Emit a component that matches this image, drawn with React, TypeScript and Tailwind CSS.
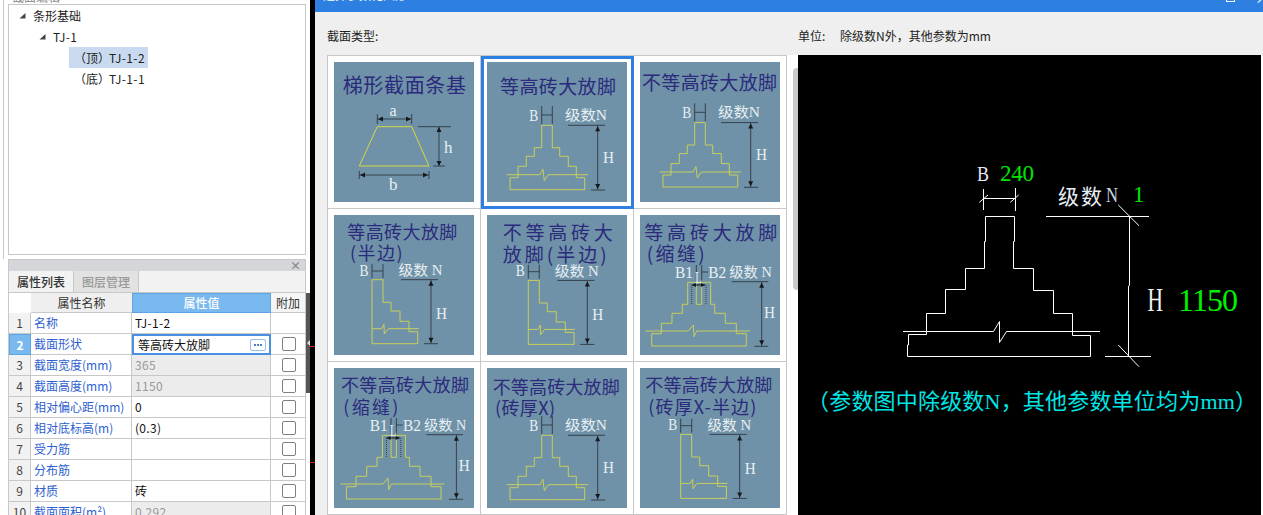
const serif = "font-['Liberation_Serif','Noto_Sans_CJK_SC',serif]";

const LINE = '#c9cf5a';
const DARK = '#36424c';
const PALE = '#e8eff3';
const NAVY = '#2b2a7c';

type TitleLine = { t: string; x: number; y: number; w: number; s?: number };

const Title = ({ lines }: { lines: TitleLine[] }) => (
    <>
        {lines.map((l) => (
            <text key={l.t} x={l.x} y={l.y} textLength={l.w} fontSize={l.s ?? 19} fill={NAVY}>
                {l.t}
            </text>
        ))}
    </>
);

const Label = ({ x, y, w, size = 16, children }: { x: number; y: number; w?: number; size?: number; children: string }) => (
    <text x={x} y={y} textLength={w} lengthAdjust="spacingAndGlyphs" fontSize={size} fill={PALE} className={serif}>
        {children}
    </text>
);

// H dimension with level line and arrows
const HeightDim = ({ x, top, bottom, x1, x2, tx1 }: { x: number; top: number; bottom: number; x1: number; x2: number; tx1: number }) => (
    <>
        <line x1={x1} x2={x2} y1={top} y2={top} stroke={DARK} />
        <line x1={x} x2={x} y1={top} y2={bottom} stroke={DARK} />
        <line x1={tx1} x2={x2} y1={bottom} y2={bottom} stroke={DARK} />
        <polygon points={`${x},${top + 1} ${x - 2.5},${top + 6} ${x + 2.5},${top + 6}`} fill="#16181c" />
        <polygon points={`${x},${bottom - 1} ${x - 2.5},${bottom - 6} ${x + 2.5},${bottom - 6}`} fill="#16181c" />
    </>
);

const WidthTick = ({ x1, x2, top, bottom }: { x1: number; x2: number; top: number; bottom: number }) => (
    <>
        <line x1={x1} x2={x1} y1={top} y2={bottom} stroke={DARK} />
        <line x1={x2} x2={x2} y1={top} y2={bottom} stroke={DARK} />
        <line x1={x1} x2={x2} y1={(top + bottom) / 2} y2={(top + bottom) / 2} stroke={DARK} />
    </>
);

const Trapezoid = () => (
    <>
        <polygon points="43.3,64.7 77.7,64.7 95,104 25.3,104" fill="none" stroke="#d6d844" />
        <WidthTick x1={43.3} x2={77.7} top={52} bottom={62} />
        <polygon points="44,57 49,54.5 49,59.5" fill="#16181c" />
        <polygon points="77,57 72,54.5 72,59.5" fill="#16181c" />
        <Label x={55.5} y={54}>a</Label>
        <line x1={84} x2={117} y1={64.7} y2={64.7} stroke={DARK} />
        <line x1={105} x2={105} y1={65} y2={104} stroke={DARK} />
        <line x1={99} x2={111} y1={104} y2={104} stroke={DARK} />
        <polygon points="105,65 102.5,70 107.5,70" fill="#16181c" />
        <polygon points="105,104 102.5,99 107.5,99" fill="#16181c" />
        <Label x={110} y={91} size={17}>h</Label>
        <WidthTick x1={25.3} x2={95} top={109} bottom={117} />
        <polygon points="26,113 31,110.5 31,115.5" fill="#16181c" />
        <polygon points="94,113 89,110.5 89,115.5" fill="#16181c" />
        <Label x={55} y={128} size={17}>b</Label>
    </>
);

const FullFooting = ({ dy = 0 }: { dy?: number }) => (
    <g transform={`translate(0 ${dy})`}>
        <polygon
            points="54.7,63.3 54.7,85.7 47.3,85.7 47.3,94.3 39.3,94.3 39.3,104.3 31,104.3 31,115.7 23,115.7 23,127.7 97.7,127.7 97.7,115.7 89.3,115.7 89.3,104.3 81.3,104.3 81.3,94.3 72.7,94.3 72.7,85.7 65.3,85.7 65.3,63.3"
            fill="none"
            stroke={LINE}
        />
        <polyline points="19.7,112.7 53,112.7 56,107.3 57.3,118.7 61.3,112.7 101.3,112.7" fill="none" stroke={LINE} />
        <WidthTick x1={54.7} x2={65.3} top={44} bottom={62} />
        <Label x={42.3} y={59} w={9}>B</Label>
        <Label x={78} y={58} w={42} size={14}>级数N</Label>
        <HeightDim x={110.7} top={63.3} bottom={128} x1={81} x2={118} tx1={104} />
        <Label x={116} y={100.7} w={11}>H</Label>
    </g>
);

const HalfFooting = ({ dx = 0, dy = 0 }: { dx?: number; dy?: number }) => (
    <g transform={`translate(${dx} ${dy})`}>
        <polygon
            points="38,64.7 38,128.7 83.7,128.7 83.7,116.7 75,116.7 75,106.3 66,106.3 66,96 57,96 57,87.3 49,87.3 49,64.7"
            fill="none"
            stroke={LINE}
        />
        <polyline points="38,113.7 47.7,113.7 50,109.3 50.3,119 54.3,113.7 84.7,113.7" fill="none" stroke={LINE} />
        <WidthTick x1={38} x2={49} top={49} bottom={63} />
        <Label x={25.5} y={60.5} w={9}>B</Label>
        <Label x={64.5} y={60} w={44} size={14}>级数 N</Label>
        <HeightDim x={97} top={64.7} bottom={128.7} x1={67} x2={104} tx1={90} />
        <Label x={102} y={104} w={11}>H</Label>
    </g>
);

const SlitFooting = ({ dx = 0 }: { dx?: number }) => (
    <g transform={`translate(${dx} 0)`}>
        <polygon
            points="47.7,67.3 47.7,89.3 42.3,89.3 42.3,98.3 32,98.3 32,108.3 21.3,108.3 21.3,118.7 11.7,118.7 11.7,131 106.3,131 106.3,118.7 96.3,118.7 96.3,108.3 85.3,108.3 85.3,98.3 74.7,98.3 74.7,89.3 70.7,89.3 70.7,67.3"
            fill="none"
            stroke={LINE}
        />
        <polyline points="56.3,67.3 56.3,89.3 61.7,89.3 61.7,67.3" fill="none" stroke={LINE} />
        <line x1={51.7} x2={51.7} y1={70} y2={90} stroke={DARK} strokeDasharray="1 1" />
        <line x1={66} x2={66} y1={70} y2={90} stroke={DARK} strokeDasharray="1 1" />
        <polyline points="5.7,116 48.3,116 53.3,110 54,121.7 56.7,116 109.7,116" fill="none" stroke={LINE} />
        <line x1={56.3} x2={56.3} y1={50} y2={67} stroke={DARK} />
        <line x1={61.7} x2={61.7} y1={50} y2={67} stroke={DARK} />
        <line x1={61.7} x2={68} y1={57} y2={57} stroke={DARK} />
        <Label x={35} y={62.7} w={18}>B1</Label>
        <Label x={68.3} y={62.7} w={18}>B2</Label>
        <Label x={89.3} y={61.7} w={42.4} size={14}>级数 N</Label>
        <Label x={55} y={68} w={7}>L</Label>
        <line x1={52} x2={65} y1={70} y2={70} stroke="#16181c" />
        <polygon points="52,70 56,68 56,72" fill="#16181c" />
        <polygon points="65,70 61,68 61,72" fill="#16181c" />
        <HeightDim x={121.7} top={66.7} bottom={131.3} x1={91.7} x2={128.3} tx1={114.3} />
        <Label x={124} y={103} w={11}>H</Label>
    </g>
);

const THUMBS = [
    { lines: [{ t: '梯形截面条基', x: 8.7, y: 31, w: 123.3, s: 20 }], art: <Trapezoid /> },
    { lines: [{ t: '等高砖大放脚', x: 13, y: 32, w: 116 }], art: <FullFooting /> },
    { lines: [{ t: '不等高砖大放脚', x: 2, y: 28, w: 135 }], art: <FullFooting dy={-2.7} /> },
    {
        lines: [
            { t: '等高砖大放脚', x: 13.3, y: 24, w: 110, s: 18 },
            { t: '(半边)', x: 16, y: 45, w: 52.7, s: 18 },
        ],
        art: <HalfFooting />,
    },
    {
        lines: [
            { t: '不等高砖大', x: 15.7, y: 25, w: 110 },
            { t: '放脚(半边)', x: 15.7, y: 47, w: 104 },
        ],
        art: <HalfFooting dx={3.3} dy={0.7} />,
    },
    {
        lines: [
            { t: '等高砖大放脚', x: 4.3, y: 25, w: 133 },
            { t: '(缩缝)', x: 6.7, y: 46, w: 58 },
        ],
        art: <SlitFooting />,
    },
    {
        lines: [
            { t: '不等高砖大放脚', x: 7, y: 24, w: 128, s: 18 },
            { t: '(缩缝)', x: 9.3, y: 46, w: 55, s: 18 },
        ],
        art: <SlitFooting dx={0.7} />,
    },
    {
        lines: [
            { t: '不等高砖大放脚', x: 5.7, y: 25.5, w: 127, s: 18 },
            { t: '(砖厚X)', x: 8, y: 47, w: 60, s: 18 },
        ],
        art: <FullFooting dy={4} />,
    },
    {
        lines: [
            { t: '不等高砖大放脚', x: 5.3, y: 24, w: 127, s: 18 },
            { t: '(砖厚X-半边)', x: 8.3, y: 46, w: 108, s: 18 },
        ],
        art: <HalfFooting dx={2.7} dy={1.7} />,
    },
];

const TreeArrow = () => (
    <svg width="7" height="6" viewBox="0 0 7 6" className="shrink-0">
        <polygon points="6.5,0 6.5,5.5 0.5,5.5" fill="#444" />
    </svg>
);

const ROWS = [
    { n: '1', name: '名称', value: 'TJ-1-2', box: false },
    { n: '2', name: '截面形状', value: '等高砖大放脚', box: true, active: true },
    { n: '3', name: '截面宽度(mm)', value: '365', box: true, muted: true },
    { n: '4', name: '截面高度(mm)', value: '1150', box: true, muted: true },
    { n: '5', name: '相对偏心距(mm)', value: '0', box: true },
    { n: '6', name: '相对底标高(m)', value: '(0.3)', box: true },
    { n: '7', name: '受力筋', value: '', box: true },
    { n: '8', name: '分布筋', value: '', box: true },
    { n: '9', name: '材质', value: '砖', box: true },
    { n: '10', name: '截面面积(m²)', value: '0.292', box: true, muted: true },
];

const TreePanel = () => (
    <div className="h-[259px] shrink-0 ml-[3px] border-l border-[#c8c8c8] pl-[4px]">
        <div className="h-1 overflow-hidden pl-1 text-xs leading-[12px] text-[#888]">
            <div className="-mt-[9px]">截面编辑</div>
        </div>
        <div className="h-[251px] w-[298px] border border-[#c8c8c8] text-xs leading-[21px] text-[#222]">
            <div className="flex h-[21px] items-center gap-[7px] pl-[10px]">
                <TreeArrow />
                <span>条形基础</span>
            </div>
            <div className="flex h-[21px] items-center gap-[7px] pl-[30px]">
                <TreeArrow />
                <span className="tracking-[0.4px]">TJ-1</span>
            </div>
            <div className="ml-[60px] flex h-[21px] w-[79px] bg-[#c9daf0] pl-[5px]">
                <span className="w-[35px] shrink-0">{'\uFF08顶\uFF09'}</span>
                <span className="tracking-[0.4px]">TJ-1-2</span>
            </div>
            <div className="ml-[60px] flex h-[21px] w-[79px] pl-[5px]">
                <span className="w-[35px] shrink-0">{'\uFF08底\uFF09'}</span>
                <span className="tracking-[0.4px]">TJ-1-1</span>
            </div>
        </div>
    </div>
);

const PropertyPanel = () => (
    <div className="flex min-h-0 flex-1">
        <div className="ml-[8px] w-[298px] shrink-0 border-x border-t border-[#c8c8c8]">
            <div className="flex h-[11px] items-center justify-end bg-[#d5d6da] pr-[4px] text-[11px] font-bold leading-none text-[#888]">×</div>
            <div className="flex h-[22px] border-b border-[#c8c8c8] bg-[#f2f2f2] text-xs leading-[22px]">
                <div className="w-[65px] border-r border-[#c8c8c8] text-center font-medium text-[#333]">属性列表</div>
                <div className="w-[65px] border-r border-[#c8c8c8] bg-[#e2e2e2] text-center font-medium text-[#999]">图层管理</div>
            </div>
            <div className="grid grid-cols-[22px_101px_139px_34px] text-xs">
                <div className="h-5" />
                <div className="h-5 border-b border-[#c8c8c8] bg-[#efefef] text-center leading-[20px] text-[#333]">属性名称</div>
                <div className="h-5 border border-[#5ea3e6] bg-[#7ab8f0] text-center font-medium leading-[18px] text-white">属性值</div>
                <div className="h-5 border-b border-[#c8c8c8] bg-[#f5f5f5] text-center leading-[20px] text-[#333]">附加</div>
                {ROWS.map((r) => (
                    <div key={r.n} className="contents">
                        <div
                            className={
                                r.active
                                    ? 'h-[21px] border border-[#5ea3e6] bg-[#7ab8f0] text-center font-bold leading-[20px] text-white'
                                    : 'h-[21px] border-b border-r border-[#c8c8c8] bg-[#f2f2f2] text-center leading-[20px] text-[#444]'
                            }
                        >
                            {r.n}
                        </div>
                        <div className="h-[21px] truncate border-b border-r border-[#c8c8c8] pl-[3px] leading-[20px] text-[#2f5fd0]">{r.name}</div>
                        {r.active ? (
                            <div className="flex h-[21px] items-center justify-between border-2 border-[#4a90e2] pl-[4px] pr-[3px] leading-[17px] text-[#111]">
                                <span>{r.value}</span>
                                <span className="flex h-[12px] w-4 items-center justify-center gap-px rounded-[2px] border border-[#8fc0ef]">
                                    <span className="h-[2px] w-[2px] bg-[#4a80c0]" />
                                    <span className="h-[2px] w-[2px] bg-[#4a80c0]" />
                                    <span className="h-[2px] w-[2px] bg-[#4a80c0]" />
                                </span>
                            </div>
                        ) : (
                            <div
                                className={
                                    r.muted
                                        ? 'h-[21px] border-b border-r border-[#c8c8c8] bg-[#ececec] pl-[3px] leading-[20px] tracking-[0.3px] text-[#999]'
                                        : 'h-[21px] border-b border-r border-[#c8c8c8] pl-[3px] leading-[20px] tracking-[0.3px] text-[#111]'
                                }
                            >
                                {r.value}
                            </div>
                        )}
                        <div className="flex h-[21px] items-center justify-center border-b border-[#c8c8c8] pl-[2px]">
                            {r.box && <span className="h-[14px] w-[14px] rounded-[2px] border border-[#808080] bg-white" />}
                        </div>
                    </div>
                ))}
            </div>
        </div>
        <div className="relative mt-[34px] h-[100px] w-[4px] bg-[#555]">
            <span className="absolute left-[1px] top-[47px] h-0 w-0 border-y-[3px] border-r-[3px] border-y-transparent border-r-[#ddd]" />
        </div>
    </div>
);

const SectionGrid = () => (
    <div className="grid h-[460px] w-[460px] grid-cols-3 content-start overflow-hidden border-l border-t border-[#c8c8c8] bg-white">
        {THUMBS.map((c, i) => (
            <div
                key={i}
                className={
                    i === 1
                        ? 'h-[153px] border-b border-r border-[#c8c8c8] p-[6px] outline-3 -outline-offset-3 outline-[#2e7fe2]'
                        : 'h-[153px] border-b border-r border-[#c8c8c8] p-[6px]'
                }
            >
                <svg width="140" height="140" viewBox="0 0 140 140" className="bg-[#6f92a8]">
                    <Title lines={c.lines} />
                    {c.art}
                </svg>
            </div>
        ))}
    </div>
);

const PreviewDrawing = () => (
    <svg width="463" height="460" viewBox="798 55 463 460" className="block bg-black" fill="none">
        <path
            d="M985.5 216.5H1014.5V241.5H1013.5V268.5H1033.5V290.5H1053.5V313.5H1072.5V335.5H1090.5V356.5H907.5V345H908.5V334.5H926.5V313.5H945.5V289.5H965.5V268.5H984.5V241.5H985.5Z"
            stroke="#fff"
        />
        <path d="M903 331.5H993.5L999.5 321.5V342.5L1006.5 331.5H1100" stroke="#fff" />
        <path d="M983.5 189V210M1015.5 188V211M983.5 198.5H1015.5M979.3 202.3L988 195M1010.3 202.3L1018.7 195" stroke="#fff" />
        <path d="M1046 216.5H1149M1129.5 216.5V285.7M1128.5 285.7V356.5M1105 356.5H1151" stroke="#fff" />
        <path d="M1118.3 205L1139 225.7M1118.3 345L1139 366.7" stroke="#fff" />
        <g className={serif}>
            <text x={977} y={181} fontSize={22} textLength={12} lengthAdjust="spacingAndGlyphs" fill="#e6e6f5">B</text>
            <text x={1000} y={181} fontSize={23} textLength={34} fill="#00e600">240</text>
            <text x={1058} y={204} fontSize={21} textLength={44} fill="#e6eef5">级数</text>
            <text x={1106} y={202} fontSize={21} textLength={12} lengthAdjust="spacingAndGlyphs" fill="#c9d4e6">N</text>
            <text x={1133} y={202} fontSize={23} fill="#00e600">1</text>
            <text x={1147.5} y={311} fontSize={33} textLength={15.5} lengthAdjust="spacingAndGlyphs" fill="#f2f2f2">H</text>
            <text x={1178} y={311} fontSize={32} textLength={60} fill="#00f000">1150</text>
            <text x={807} y={409} fontSize={22} textLength={450} fill="#00e6e6">{'\uFF08参数图中除级数N\uFF0C其他参数单位均为mm\uFF09'}</text>
        </g>
    </svg>
);

export default function App() {
    return (
        <div className="flex h-[515px] w-[1263px] overflow-hidden bg-white font-['Noto_Sans_CJK_SC','Noto_Sans',sans-serif]">
            <aside className="flex h-full w-[310px] shrink-0 flex-col">
                <TreePanel />
                <PropertyPanel />
            </aside>
            <div className="h-full w-[5px] shrink-0 bg-black">
                <div className="mt-[346px] h-px bg-[#e02020]" />
                <div className="mt-[115px] h-px bg-[#e02020]" />
            </div>
            <main className="flex h-full flex-1 flex-col bg-[#efefef]">
                <header className="flex h-3 shrink-0 justify-between overflow-hidden bg-[#2e7fe2] pl-2 text-xs leading-4 text-white">
                    <span className="-mt-[13px]">选择参数化图形</span>
                    <div className="flex gap-5">
                        <span className="-mt-[7px] h-[9px] w-[9px] border border-white" />
                        <span className="-mt-[10px] w-2 text-sm leading-[14px]">×</span>
                    </div>
                </header>
                <div className="flex h-[43px] shrink-0 items-center pl-3 pt-[5px] text-xs text-[#222]">
                    <span className="w-[471px]">截面类型:</span>
                    <span className="w-[42px]">单位:</span>
                    <span>{'除级数N外\uFF0C其他参数为mm'}</span>
                </div>
                <div className="flex min-h-0 flex-1 pl-3">
                    <SectionGrid />
                    <div className="h-full w-[11px] bg-white pl-[6px] pt-[13px]">
                        <div className="h-[222px] rounded-l-[4px] bg-[#c9c9c9]" />
                    </div>
                    <PreviewDrawing />
                    <div className="h-full w-[2px] bg-white" />
                </div>
            </main>
        </div>
    );
}
